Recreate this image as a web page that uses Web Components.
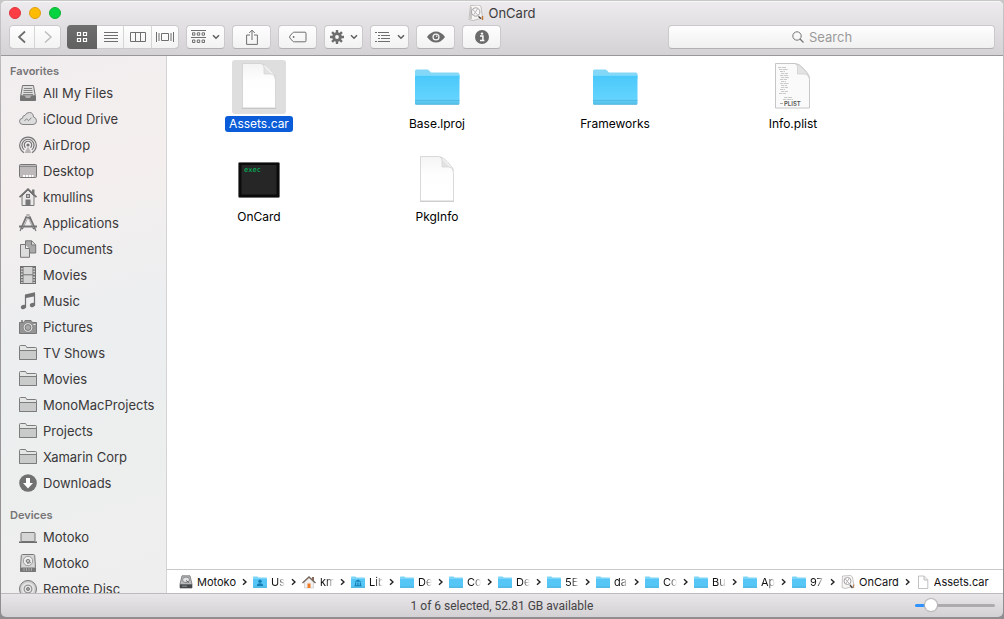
<!DOCTYPE html>
<html lang="en">
<head>
<meta charset="utf-8">
<title>OnCard</title>
<style>
  html, body { margin: 0; height: 100%; }
  body {
    font-family: Inter, Roboto, "Liberation Sans", sans-serif;
    font-size: 13px;
    color: #3a383a;
    background: linear-gradient(#c9c8c9, #a3a1a3 30%, #8f8d8f);
    overflow: hidden;
  }
</style>
</head>
<body>
<finder-window>
  <finder-toolbar slot="toolbar" heading="OnCard"></finder-toolbar>

  <side-bar slot="sidebar">
    <side-section heading="Favorites">
      <side-item icon="allfiles">All My Files</side-item>
      <side-item icon="cloud">iCloud Drive</side-item>
      <side-item icon="airdrop">AirDrop</side-item>
      <side-item icon="desktop">Desktop</side-item>
      <side-item icon="home">kmullins</side-item>
      <side-item icon="apps">Applications</side-item>
      <side-item icon="documents">Documents</side-item>
      <side-item icon="movies">Movies</side-item>
      <side-item icon="music">Music</side-item>
      <side-item icon="camera">Pictures</side-item>
      <side-item icon="folder">TV Shows</side-item>
      <side-item icon="folder">Movies</side-item>
      <side-item icon="folder">MonoMacProjects</side-item>
      <side-item icon="folder">Projects</side-item>
      <side-item icon="folder">Xamarin Corp</side-item>
      <side-item icon="download">Downloads</side-item>
    </side-section>
    <side-section heading="Devices">
      <side-item icon="laptop">Motoko</side-item>
      <side-item icon="drive">Motoko</side-item>
      <side-item icon="disc">Remote Disc</side-item>
    </side-section>
  </side-bar>

  <file-grid>
    <file-item icon="bigdoc" selected>Assets.car</file-item>
    <file-item icon="bigfolder">Base.lproj</file-item>
    <file-item icon="bigfolder">Frameworks</file-item>
    <file-item icon="bigplist">Info.plist</file-item>
    <file-item icon="bigexec">OnCard</file-item>
    <file-item icon="bigdoc">PkgInfo</file-item>
  </file-grid>

  <path-bar slot="path">
    <path-crumb icon="pdrive">Motoko</path-crumb>
    <path-crumb icon="pusers" short>Us</path-crumb>
    <path-crumb icon="phome" short>km</path-crumb>
    <path-crumb icon="plibrary" short>Lib</path-crumb>
    <path-crumb icon="pfolder" short>De</path-crumb>
    <path-crumb icon="pfolder" short>Co</path-crumb>
    <path-crumb icon="pfolder" short>De</path-crumb>
    <path-crumb icon="pfolder" short>5E</path-crumb>
    <path-crumb icon="pfolder" short>da</path-crumb>
    <path-crumb icon="pfolder" short>Co</path-crumb>
    <path-crumb icon="pfolder" short>Bu</path-crumb>
    <path-crumb icon="pfolder" short>Ap</path-crumb>
    <path-crumb icon="pfolder" short>97</path-crumb>
    <path-crumb icon="papp">OnCard</path-crumb>
    <path-crumb icon="pdoc" last>Assets.car</path-crumb>
  </path-bar>

  <status-bar slot="status">1 of 6 selected, 52.81 GB available</status-bar>
</finder-window>

<script>
const tinyFolder = `<path d="M0 2.3q0-.8.8-.8h3.6l1.2 1h7.6q.8 0 .8.8V5H0z" fill="#7cd5f8"/><path d="M0 4h14v8.2q0 .5-.5.5H.5q-.5 0-.5-.5z" fill="#55c6f5"/><path d="M0 12.2h14" stroke="#45aedb"/>`;

/* Each entry: [width, height, markup] */
const ICONS = {
  back: [10, 14, `<path d="M8 1.5 2 7l6 5.5" fill="none" stroke="#6b6b6c" stroke-width="1.7"/>`],
  forward: [10, 14, `<path d="M2 1.5 8 7l-6 5.5" fill="none" stroke="#bdbcbd" stroke-width="1.5"/>`],
  grid: [12, 12, `<path d="M1.5 1.5h3v3h-3zM7.5 1.5h3v3h-3zM1.5 7.5h3v3h-3zM7.5 7.5h3v3h-3z" fill="none" stroke="#fff" stroke-width="1.2"/>`],
  rows: [14, 12, `<path d="M0 1.5h14M0 4.5h14M0 7.5h14M0 10.5h14" stroke="#6e6e6f"/>`],
  columns: [16, 11, `<path d="M.5 .5h15v9H.5zM5.5 .5v9M10.5 .5v9" fill="none" stroke="#6e6e6f"/>`],
  flow: [18, 12, `<path d="M.5 1v10M3 2v8M15 2v8M17.5 1v10M5.5 2.5h7v7h-7z" fill="none" stroke="#6e6e6f"/>`],
  arrange: [15, 14, `<path d="M0 .5h15M0 7.5h15" stroke="#6e6e6f"/><path d="M1.5 2.800h2.4v2.4H1.5zM6.3 2.8h2.4v2.4H6.3zM11.1 2.8h2.4v2.4h-2.4zM1.5 10h2.4v2.5H1.5zM6.3 10h2.4v2.5H6.3zM11.1 10h2.4v2.5h-2.4z" fill="none" stroke="#6e6e6f"/>`],
  chevron: [8, 6, `<path d="M1 1.2 4 4.2 7 1.2" fill="none" stroke="#5d5d5e" stroke-width="1.5"/>`],
  share: [12, 16, `<path d="M4 6H.6v9.400h10.800V6H8M6 11V1.200M3.200 4 6 1.200 8.800 4" fill="none" stroke="#6e6e6f"/>`],
  tag: [18, 12, `<path d="M5.200 1.200H16q1 0 1 1v7.600q0 1-1 1H5.200q-1 0-1.600-.7L.9 7q-.6-1 0-2l2.700-3.100q.6-.7 1.600-.7z" fill="none" stroke="#6e6e6f"/><circle cx="4.6" cy="6" r=".9" fill="#6e6e6f"/>`],
  gear: [14, 14, `<g stroke="#6e6e6f" stroke-width="2.4"><path d="M7 0v14M0 7h14M2.050 2.050l9.900 9.900M11.950 2.050l-9.900 9.900"/></g><circle cx="7" cy="7" r="4.8" fill="#6e6e6f"/><circle cx="7" cy="7" r="1.900" fill="#f8f8f8"/>`],
  outline: [16, 12, `<path d="M0 1.5h2M3 1.5h11M3 4.5h2M6 4.5h9M3 7.5h2M6 7.5h9M0 10.5h2M3 10.5h12" stroke="#6e6e6f"/>`],
  eye: [18, 12, `<path d="M0 6Q4 .5 9 .5T18 6Q14 11.500 9 11.500T0 6z" fill="#6b6b6c"/><circle cx="9" cy="6" r="3.6" fill="#f4f4f4"/><circle cx="9" cy="6" r="2.3" fill="#6b6b6c"/><circle cx="9.600" cy="5.300" r=".8" fill="#f4f4f4"/>`],
  info: [14, 14, `<circle cx="7" cy="7" r="7" fill="#6b6b6c"/><circle cx="7" cy="3.600" r="1.200" fill="#fff"/><path d="M5 6h2.900v4M5 10.500h4.400" fill="none" stroke="#fff" stroke-width="1.500"/>`],
  search: [12, 12, `<circle cx="5" cy="5" r="4.200" fill="none" stroke="#767676"/><path d="m8 8 3.500 3.500" stroke="#767676" stroke-width="1.200"/>`],
  titleapp: [16, 16, `<path d="M2.500.5 11 0l2 1.500L14.500 13 5 15.500l-4-1z" fill="#f7f6f5" stroke="#b5b2b0" stroke-width=".8"/><path d="M3 2v12" stroke="#c9c6c5" stroke-width="2"/><circle cx="7.700" cy="7" r="4.200" fill="#f8f8f8" stroke="#a5a3a5"/><path d="m4.500 4 6 7M5 11l5-8" stroke="#bab8b9"/><path d="m10.500 11.500 2.500 2" stroke="#3f3634" stroke-width="1.300"/><path d="M14.500 11v4" stroke="#c07a36" stroke-width="1.500"/>`],

  allfiles: [18, 18, `<path d="M3.500 1.500h11l1.800 10.500H1.700z" fill="#dededf" stroke="#747475"/><path d="M5 4.500h8M4.500 6.500h9M4.500 8.500h9M4 10.500h10" stroke="#858586"/><path d="M1.500 12h4l1 2h5l1-2h4v4.500h-15z" fill="#747475" stroke="#747475"/>`],
  cloud: [18, 18, `<path d="M4 14.500q-3.500 0-3.500-3.200 0-2.800 3-3 0-3 2.600-3Q7.300 2.500 10.500 2.500q3.700 0 4 4.500 3 .8 3 3.800 0 3.700-3.500 3.700z" fill="#dddcdd" stroke="#848384"/><path d="m5.500 11 2-2.300 2 2 3-3" fill="none" stroke="#848384"/>`],
  airdrop: [18, 18, `<g fill="none" stroke="#777677" stroke-width="1.200"><path d="M5 16.700a8.300 8.300 0 1 1 8 0M5.200 13.900a6 6 0 1 1 7.600 0M6.500 11.700a3.700 3.700 0 1 1 5 0"/></g><circle cx="9" cy="9" r="1.600" fill="#777677"/><path d="m9 10.500 3.500 6.500h-7z" fill="#b7b5b6"/>`],
  desktop: [18, 18, `<rect x=".5" y="2.500" width="17" height="13" rx="1" fill="#bdb9ba" stroke="#777"/><path d="M1 4.500h16" stroke="#8c8b8c"/><path d="M4 13h2.200v2H4zM7 13h2.200v2H7zM10 13h2.200v2H10zM13 13h1.500v2H13z" fill="#fff"/>`],
  home: [18, 18, `<path d="M13 1.500h2.500V6H13z" fill="#777"/><path d="M3 8v9.500h12V8L9 2z" fill="#ebe8e8" stroke="#777"/><path d="M.5 9.200 9 1.200l8.500 8" fill="none" stroke="#727172" stroke-width="1.800"/><path d="M6.500 11.500h5V17h-5z" fill="#777"/><rect x="7.500" y="6.500" width="3" height="3" fill="#bbb" stroke="#777"/>`],
  apps: [18, 18, `<g fill="none"><path d="M8 2.500 2.500 15M10 2.500 15.500 15" stroke="#777677" stroke-width="3"/><path d="M8.200 4 3.500 14M10 5l4.500 9" stroke="#e3e0e0" stroke-width=".8"/><path d="M2.500 14 1 17M15.500 14l1.500 3M7.300 1l3.400 0" stroke="#777677" stroke-width="1.200"/><path d="M0 12.500h18" stroke="#777677" stroke-width="2"/></g>`],
  documents: [18, 18, `<path d="M6.500 13V.8h6.300l3.900 4V13z" fill="#aaa9a9" stroke="#777"/><path d="M12.500 1v4h4" fill="#ddd" stroke="#777"/><path d="M1.500 17.300V4.500h5l4 4v8.800z" fill="#dedddd" stroke="#777"/><path d="M6.500 4.500v4h4" fill="#f2f2f2" stroke="#777"/>`],
  movies: [18, 18, `<rect x="1.500" y=".5" width="15" height="17" fill="#d5d4d5" stroke="#727272"/><path d="M3 1v16M15 1v16" stroke="#717171" stroke-width="3"/><path d="M2.900 2v15M15.100 2v15" stroke="#eee" stroke-width="1.300" stroke-dasharray="1.500 1.300"/><path d="M4 8.800h10" stroke="#727272"/>`],
  music: [18, 18, `<path d="M6.500 3v11.500M15.500 1.500v11" stroke="#717172" stroke-width="1.200"/><path d="M6 2.500 16 .3v3.900L6 6.200z" fill="#717172"/><ellipse cx="4.500" cy="15" rx="2.700" ry="2.100" transform="rotate(-20 4.500 15)" fill="#717172"/><ellipse cx="13.500" cy="13" rx="2.700" ry="2.100" transform="rotate(-20 13.500 13)" fill="#717172"/>`],
  camera: [18, 18, `<path d="M.5 4.500h4l1.500-2h6l1.500 2h4v11H.5z" fill="#969596" stroke="#777"/><path d="M2 3h2" stroke="#777" stroke-width="1.500"/><circle cx="9" cy="9.500" r="4.800" fill="#e2e2e2" stroke="#777" stroke-width=".7"/><circle cx="9" cy="9.500" r="2.900" fill="#aaa" stroke="#777"/><path d="M14.500 6.500h2" stroke="#eee"/>`],
  folder: [18, 18, `<path d="M.5 15.500v-13q0-1 1-1h4.500q1 0 1.300 1l.4 1h8.800q1 0 1 1v11z" fill="#e4e5e5" stroke="#7c7c7d"/><path d="M.5 6.500h17v9H.5z" fill="#c9caca" stroke="#7c7c7d"/>`],
  download: [18, 18, `<circle cx="9" cy="9" r="8.800" fill="#717171"/><path d="M7 4h4v5h3l-5 5.500L4 9h3z" fill="#fff"/>`],
  laptop: [18, 18, `<rect x="2" y="4.500" width="14" height="9" rx="1" fill="#d5d5d5" stroke="#777"/><path d="M0 14.200h18" stroke="#6f6f6f" stroke-width="1.600"/>`],
  drive: [18, 18, `<path d="M3.500.5h11q1 0 1.200 1l.8 12v4h-15v-4l.8-12q.2-1 1.200-1z" fill="#d6d6d6" stroke="#777"/><path d="M1.500 13.500h15v4h-15z" fill="#777"/><path d="M5 14v3M7.500 14v3M10 14v3M12.500 14v3" stroke="#aaa"/><circle cx="9" cy="7" r="4.700" fill="#eee" stroke="#9a9a9a"/><ellipse cx="9" cy="7" rx="1.900" ry="1.500" fill="#ccc" stroke="#777"/><path d="m8 9.500 4-1" stroke="#8a8a8a"/>`],
  disc: [18, 18, `<circle cx="9" cy="9" r="8.500" fill="#cfcfcf" stroke="#777"/><circle cx="9" cy="9" r="5.500" fill="none" stroke="#e6e6e6" stroke-width="1.500"/><circle cx="9" cy="9" r="3.900" fill="#e8e8e8" stroke="#8c8c8c"/><circle cx="9" cy="9" r="1.500" fill="#aaa" stroke="#777"/>`],

  bigdoc: [48, 48, `<defs><linearGradient id="d" x1="0" y1="1" x2="1" y2="0"><stop offset=".45" stop-color="#e2e2e2"/><stop offset=".6" stop-color="#fff"/></linearGradient><linearGradient id="p" x1="0" y1="0" x2="0" y2="1"><stop offset="0" stop-color="#f4f4f4"/><stop offset=".4" stop-color="#fefefe"/><stop offset="1" stop-color="#fff"/></linearGradient></defs><g transform="translate(0 -1)"><path d="M7.500 1.500h18q4.500.5 8.500 5l3.500 4q3 3.500 3 8v27.500h-33z" fill="url(#p)" stroke="#cfcfcf" stroke-width=".8"/><path d="M27 2q2 .5 2 4.500V12h6.500q4 0 5 3.500-.5-2.500-3-5L34 6.500Q30.500 2.500 27 2z" fill="url(#d)" stroke="#d2d2d2" stroke-width=".7"/><path d="M7 46.400h34" stroke="#bbb" stroke-width=".7"/></g>`],
  bigfolder: [48, 48, `<defs><linearGradient id="f" x1="0" y1="0" x2="0" y2="1"><stop offset="0" stop-color="#4ac8fa"/><stop offset=".8" stop-color="#63d3fe"/><stop offset="1" stop-color="#55bfe8"/></linearGradient></defs><path d="M2 8q0-1.500 1.500-1.500h10.500q1.500 0 2.300 1.200l1.100 1.400q.5.500 1.500.5h25.800q1.800 0 1.800 1.700V16H2z" fill="#84d7f7"/><path d="M2 12.500h44.500v27.800q0 1.200-1.200 1.200H3.200q-1.200 0-1.200-1.200z" fill="url(#f)"/><path d="M2 12.500h44.500" stroke="#79dafe" stroke-width=".8"/><path d="M2 37.500h44.500M2.500 41.400h43.500" stroke="#4fb2da" stroke-width=".7"/>`],
  bigplist: [48, 48, `<g transform="translate(-1 -1)"><path d="M7.500 1.500h20q4 .5 7.500 4.500l4 4.500q2.500 3 2.500 7v28.500h-34z" fill="#fafafa" stroke="#b7b7b7" stroke-width=".8"/><path d="M27.500 2q2.500 1 2 5v5h6.500q4 0 5 3.500-.5-2.500-2.500-5L34.500 6q-3.500-4-7-4z" fill="#e3e3e3" stroke="#ccc" stroke-width=".7"/><path d="M10 5.500h8M11 7.500h9M12 9.500h5M13 11.500h7M12 13.500h8M13 15.500h8M12 17.500h7M13 19.500h5M12 21.500h9M13 23.500h6M13 25.500h7M12 27.500h5M13 29.500h7M11 31.500h7M16 35.500h8M15 37.500h10" stroke="#c3c3c3" stroke-width=".9" stroke-dasharray="3 .6 5 .5"/><path d="M12 41.500h3" stroke="#aaa"/><text x="16" y="43.500" font-family="Inter,sans-serif" font-size="6" font-weight="600" fill="#555">PLIST</text></g>`],
  bigexec: [48, 48, `<rect x="3.500" y="6.500" width="41" height="35" rx="1" fill="#0b0b0b" stroke="#5b5b5b" stroke-width=".5"/><rect x="6.500" y="9" width="35" height="29.500" fill="#262626"/><text x="9" y="16" font-family="DejaVu Sans Mono,monospace" font-size="7" fill="#00c462">exec</text>`],

  pfolder: [14, 14, tinyFolder],
  pusers: [14, 14, tinyFolder + `<circle cx="7" cy="6.300" r="1.700" fill="#167fb5"/><path d="M3.800 11q0-2.800 3.200-2.800t3.200 2.800z" fill="#167fb5"/>`],
  plibrary: [14, 14, tinyFolder + `<path d="M3.500 6.800 7 4.500l3.500 2.300zM4 7.500h1.200v3H4zM6.400 7.500h1.200v3H6.400zM8.800 7.500H10v3H8.800zM3.500 10.300h7v1h-7z" fill="#167fb5"/>`],
  phome: [14, 14, `<path d="M10 2h2v4h-2z" fill="#8b6a58"/><path d="M2.500 6.500V13h9V6.500L7 2.500z" fill="#f2f0ee" stroke="#bbb" stroke-width=".5"/><path d="M.5 8 7 2l6.500 6" fill="none" stroke="#76685f" stroke-width="1.500"/><path d="M5.500 8.500h3V13h-3z" fill="#ee7a24"/>`],
  pdrive: [14, 14, `<path d="M3 .8h8L13 9v4H1V9z" fill="#b9bcbd" stroke="#6f7274" stroke-width=".8"/><path d="M1 9.300h12V13H1z" fill="#45494c"/><ellipse cx="7" cy="4.800" rx="3.500" ry="2.800" fill="#e0e2e3" stroke="#888"/><path d="m7 5.500 3 2" stroke="#666"/><path d="M3 11.200h5" stroke="#8d9092"/>`],
  papp: [14, 14, `<path d="m1.500 1 8-.5 2 1.500 1.500 9-8.500 2.500-3.500-1z" fill="#f7f6f5" stroke="#b0adab" stroke-width=".7"/><circle cx="6.500" cy="6" r="3.500" fill="#fff" stroke="#a5a3a4"/><path d="m4 3.500 5 6M4.500 9l4-6" stroke="#b5b3b4"/><path d="m9 10 2.500 3" stroke="#4a403d" stroke-width="1.300"/><path d="M12.700 9.500V13" stroke="#b97b44"/>`],
  pdoc: [14, 14, `<path d="M2.500 1h5.700l3.600 3.800V13.500H2.500z" fill="#fff" stroke="#b2b2b2" stroke-width=".8"/><path d="M8 1v4h3.800" fill="#eee" stroke="#b2b2b2" stroke-width=".8"/>`],
  crumb: [5, 8, `<path d="M1 1.200 4 4 1 6.800" fill="none" stroke="#222" stroke-width="1.400"/>`]
};

function define(name, html, setup) {
  const template = document.createElement('template');
  template.innerHTML = html;
  customElements.define(name, class extends HTMLElement {
    constructor() {
      super();
      this.attachShadow({ mode: 'open' }).append(template.content.cloneNode(true));
    }
    connectedCallback() { if (setup) setup(this, this.shadowRoot); }
  });
}

function makeIcon(name) {
  const icon = document.createElement('ui-icon');
  icon.setAttribute('name', name);
  return icon;
}

define('ui-icon', `<style>:host { display: block; flex: none; line-height: 0; } svg { display: block; }</style>`, (host, root) => {
  const [w, h, body] = ICONS[host.getAttribute('name')];
  const holder = document.createElement('template');
  holder.innerHTML = `<svg width="${w}" height="${h}" viewBox="0 0 ${w} ${h}" aria-hidden="true">${body}</svg>`;
  root.append(holder.content);
});

define('tool-button', `
  <style>
    :host { display: block; }
    button {
      box-sizing: border-box; width: 100%; height: 24px; margin: 0; padding: 0;
      display: flex; align-items: center; justify-content: center; gap: 6px;
      border: 1px solid #cbc9cb; border-bottom-color: #b3b1b3; border-radius: 4px;
      background: linear-gradient(#fefefe, #f2f2f2);
    }
    :host([joined]) button { border-color: transparent #d6d5d6 transparent transparent; border-radius: 0; background: none; }
    :host([joined]:last-of-type) button { border-right-color: transparent; }
    :host([pressed]) button { border: 0; background: linear-gradient(#6f6e6f, #616061); }
  </style>
  <button type="button"><slot></slot></button>`, (host, root) => {
  root.querySelector('button').setAttribute('aria-label', host.getAttribute('label'));
});

define('button-group', `
  <style>
    :host {
      display: flex; box-sizing: border-box; height: 24px; overflow: hidden;
      border-radius: 4px; background: linear-gradient(#fefefe, #f2f2f2);
      box-shadow: inset 0 0 0 1px #cbc9cb, inset 0 -1px #b3b1b3;
    }
    ::slotted(*) { flex: 1; }
  </style><slot></slot>`);

define('search-field', `
  <style>
    :host { display: block; }
    label {
      box-sizing: border-box; height: 24px; padding-right: 18px;
      display: flex; align-items: center; justify-content: center; gap: 5px;
      border: 1px solid #cbc9cb; border-bottom-color: #b3b1b3; border-radius: 4px;
      background: linear-gradient(#fefefe, #f0f0f0);
    }
    input { width: 44px; field-sizing: content; padding: 0; border: 0; outline: 0; background: none; font: inherit; color: #333; }
    input::placeholder { color: #9b9a9b; opacity: 1; }
  </style>
  <label><ui-icon name="search"></ui-icon><input type="text" placeholder="Search" aria-label="Search"></label>`);

define('finder-toolbar', `
  <style>
    :host {
      display: block; padding: 0 8px 6px; border-bottom: 1px solid #999799;
      background: linear-gradient(#edebed, #d4d2d4);
      border-radius: 5px 5px 0 0; box-shadow: inset 0 1px #f7f6f7;
    }
    header { display: grid; grid-template-columns: 1fr auto 1fr; align-items: center; height: 24px; }
    .lights { display: flex; gap: 8px; }
    .lights button { box-sizing: border-box; width: 12px; height: 12px; padding: 0; border-width: 1px; border-style: solid; border-radius: 50%; }
    .lights .close { background: #fc3d43; border-color: #df343d; }
    .lights .min { background: #fdbb05; border-color: #dfa016; }
    .lights .zoom { background: #05d33f; border-color: #12b035; }
    h1 { margin: 0; display: flex; align-items: center; gap: 4px; font-size: 13px; font-weight: 400; line-height: 20px; color: #3d3c3d; }
    .tools { display: flex; gap: 7px; }
    .nav { width: 52px; margin-right: -1px; }
    .views { width: 112px; }
    .views tool-button:first-child { flex: 0 0 30px; }
    .tools > tool-button { width: 39px; }
    search-field { flex: 0 1 327px; margin-left: auto; }
  </style>
  <header>
    <div class="lights">
      <button class="close" type="button" aria-label="Close"></button>
      <button class="min" type="button" aria-label="Minimize"></button>
      <button class="zoom" type="button" aria-label="Zoom"></button>
    </div>
    <h1><ui-icon name="titleapp"></ui-icon><span></span></h1>
  </header>
  <div class="tools">
    <button-group class="nav">
      <tool-button joined label="Back"><ui-icon name="back"></ui-icon></tool-button>
      <tool-button joined label="Forward"><ui-icon name="forward"></ui-icon></tool-button>
    </button-group>
    <button-group class="views">
      <tool-button joined pressed label="Icons"><ui-icon name="grid"></ui-icon></tool-button>
      <tool-button joined label="List"><ui-icon name="rows"></ui-icon></tool-button>
      <tool-button joined label="Columns"><ui-icon name="columns"></ui-icon></tool-button>
      <tool-button joined label="Cover Flow"><ui-icon name="flow"></ui-icon></tool-button>
    </button-group>
    <tool-button label="Arrange"><ui-icon name="arrange"></ui-icon><ui-icon name="chevron"></ui-icon></tool-button>
    <tool-button label="Share"><ui-icon name="share"></ui-icon></tool-button>
    <tool-button label="Tags"><ui-icon name="tag"></ui-icon></tool-button>
    <tool-button label="Action"><ui-icon name="gear"></ui-icon><ui-icon name="chevron"></ui-icon></tool-button>
    <tool-button label="Group"><ui-icon name="outline"></ui-icon><ui-icon name="chevron"></ui-icon></tool-button>
    <tool-button label="Quick Look"><ui-icon name="eye"></ui-icon></tool-button>
    <tool-button label="Get Info"><ui-icon name="info"></ui-icon></tool-button>
    <search-field></search-field>
  </div>`, (host, root) => {
  root.querySelector('h1 span').textContent = host.getAttribute('heading');
});

define('side-bar', `
  <style>
    :host {
      display: block; box-sizing: border-box; overflow: hidden; padding-top: 6px;
      border-right: 1px solid #d5d4d4;
      background: linear-gradient(165deg, #f1eeef, #f4efee 25%, #eceef0 50%, #ecefee 70%, #efeeee);
    }
  </style><slot></slot>`);

define('side-section', `
  <style>
    :host { display: block; margin-bottom: 10px; }
    h2 { margin: 0; padding-left: 9px; font-size: 11px; line-height: 18px; font-weight: 600; color: #767476; }
  </style>
  <h2></h2><nav><slot></slot></nav>`, (host, root) => {
  const title = host.getAttribute('heading');
  root.querySelector('h2').textContent = title;
  root.querySelector('nav').setAttribute('aria-label', title);
});

define('side-item', `
  <style>
    :host { display: block; }
    a { display: flex; align-items: center; gap: 6px; height: 26px; padding-left: 18px; color: inherit; text-decoration: none; white-space: nowrap; }
  </style>
  <a href="#"><span><slot></slot></span></a>`, (host, root) => {
  root.querySelector('a').prepend(makeIcon(host.getAttribute('icon')));
});

define('file-grid', `
  <style>
    :host {
      display: grid; grid-template-columns: repeat(auto-fill, 178px); grid-auto-rows: 93px;
      align-content: start; padding: 4px 3px; background: #fff; overflow: hidden;
    }
  </style><slot></slot>`);

define('file-item', `
  <style>
    :host { display: flex; flex-direction: column; align-items: center; gap: 2px; color: #000; }
    .pic { padding: 3px; border-radius: 3px; }
    a { padding: 0 4px; border-radius: 3px; font-size: 12px; line-height: 16px; color: inherit; text-decoration: none; }
    :host([selected]) .pic { background: #dedede; }
    :host([selected]) a { background: #0a5cd8; color: #fff; }
  </style>
  <div class="pic"></div><a href="#"><slot></slot></a>`, (host, root) => {
  root.querySelector('.pic').append(makeIcon(host.getAttribute('icon')));
});

define('path-bar', `
  <style>
    :host {
      display: flex; align-items: center; gap: 6px; height: 23px; padding: 0 12px;
      border-top: 1px solid #c9c9c9; background: #fff; overflow: hidden;
    }
  </style><slot></slot>`);

define('path-crumb', `
  <style>
    :host { display: flex; align-items: center; gap: 6px; flex: none; font-size: 11px; line-height: 16px; color: #111; }
    a { display: flex; align-items: center; gap: 4px; color: inherit; text-decoration: none; }
    span { white-space: nowrap; overflow: hidden; }
    :host([short]) span { width: 14px; -webkit-mask-image: linear-gradient(90deg, #000 45%, transparent); mask-image: linear-gradient(90deg, #000 45%, transparent); }
    :host([last]) .sep { display: none; }
  </style>
  <a href="#"><span><slot></slot></span></a><ui-icon class="sep" name="crumb"></ui-icon>`, (host, root) => {
  root.querySelector('a').prepend(makeIcon(host.getAttribute('icon')));
});

define('status-bar', `
  <style>
    :host {
      display: grid; grid-template-columns: 1fr auto 1fr; align-items: center; height: 23px; padding: 0 8px;
      border-top: 1px solid #bcbabc; background: linear-gradient(#e9e6e9, #d3d1d3);
      border-radius: 0 0 5px 5px; font-family: Roboto, Inter, sans-serif; font-size: 12px; color: #454345;
    }
    p { grid-column: 2; margin: 0; }
    input { justify-self: end; width: 80px; height: 14px; margin: 0; -webkit-appearance: none; appearance: none; background: none; }
    input::-webkit-slider-runnable-track {
      height: 3px; border-radius: 2px;
      background: linear-gradient(90deg, #2f92fd 20%, #adabad 20%);
    }
    input::-webkit-slider-thumb {
      -webkit-appearance: none; width: 12px; height: 12px; margin-top: -5px; border-radius: 50%;
      background: #fff; box-shadow: 0 0 1px 1px #b5b3b5;
    }
  </style>
  <p><slot></slot></p>
  <input type="range" min="0" max="100" value="14" aria-label="Icon size">`);

define('finder-window', `
  <style>
    :host { display: flex; flex-direction: column; box-sizing: border-box; height: 100vh; padding: 1px 1px 2px; }
    .body { flex: 1; min-height: 0; display: grid; grid-template-columns: 166px minmax(0, 1fr); grid-template-rows: minmax(0, 1fr); }
    .content { display: flex; flex-direction: column; min-height: 0; }
    ::slotted(file-grid) { flex: 1; }
  </style>
  <slot name="toolbar"></slot>
  <div class="body">
    <slot name="sidebar"></slot>
    <main class="content"><slot></slot><slot name="path"></slot></main>
  </div>
  <slot name="status"></slot>`);
</script>
</body>
</html>
